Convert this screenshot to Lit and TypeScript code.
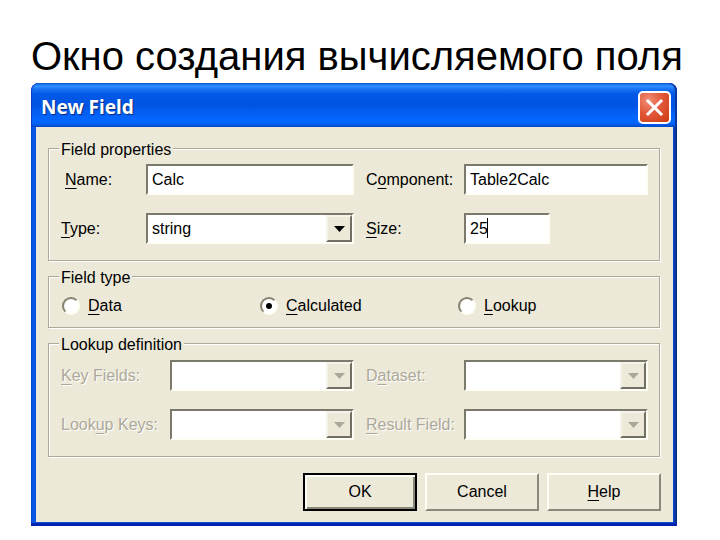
import { LitElement, html, css, svg, nothing } from "lit";
import { customElement, property, state } from "lit/decorators.js";

/** Drop-down with the sunken classic frame and a raised arrow button. */
const comboBox = (id: string, value: string, disabled = false) => html`
  <span class="combo ${disabled ? "off" : ""}">
    <select class="field" id=${id} ?disabled=${disabled}>
      <option>${value}</option>
    </select>
    <span class="arrow" aria-hidden="true">
      <svg class="tri" viewBox="0 0 11 6" width="11" height="6">${svg`<path d="M0 0H11L5.500 6Z" fill="currentColor"/>`}</svg>
    </span>
  </span>
`;

@customElement("app-root")
export class AppRoot extends LitElement {
  @property() heading = "Окно создания вычисляемого поля";
  @state() private kind = "calculated";

  static styles = css`
    :host {
      display: block;
      background: #fff;
      color: #000;
      font-family: "Liberation Sans", Arial, sans-serif;
      font-size: 16px;
      line-height: 20px;
    }
    * {
      box-sizing: border-box;
    }
    h1 {
      margin: 0;
      padding: 33px 29px 4px 31px;
      font-size: 40px;
      line-height: 46px;
      font-weight: 400;
      white-space: nowrap;
    }
    .window {
      margin: 0 43px 14px 31px;
      padding: 0 4px 4px 5px;
      border-radius: 8px 8px 0 0;
      background: linear-gradient(90deg, #0a3fc4 0, #0a5cf0 2px, #0a4ed8 5px, #0a4ed8 calc(100% - 4px), #0b3fb4 calc(100% - 3px), #062a80 100%);
      box-shadow: inset 0 -3px 0 #0322b0;
    }
    .titlebar {
      display: flex;
      align-items: center;
      justify-content: space-between;
      height: 44px;
      margin: 0 -4px 0 -5px;
      padding: 4px 6px 0 10px;
      border-radius: 8px 8px 0 0;
      background: linear-gradient(#0a56d0 0, #2f92ff 3px, #1a74f4 6px, #0358e6 11px, #0054e3 22px, #0464fb 34px, #0466ff 40px, #0148c4 44px);
      box-shadow: inset 1px 0 0 #0a3fc4, inset -2px 0 0 #0a38a0;
    }
    h2 {
      margin: 0;
      color: #fff;
      font-family: "Noto Sans", sans-serif;
      font-size: 19px;
      line-height: 24px;
      font-weight: 700;
      text-shadow: 1px 1px 1px #0a2a80;
    }
    .close {
      display: grid;
      place-items: center;
      width: 33px;
      height: 33px;
      padding: 0;
      border: 2px solid #fff;
      border-radius: 5px;
      background: radial-gradient(circle at 30% 25%, #f09078 0, #e2593a 45%, #cc3a10 100%);
    }
    form {
      padding: 9px 12px 11px;
      background: #ece9d8;
    }
    fieldset {
      min-width: 0;
      margin: 0 1px 3px 0;
      padding: 4px 11px 16px 12px;
      border: 1px solid #aca899;
      box-shadow: 1px 1px 0 #fff, inset 1px 1px 0 #fff;
    }
    .lookup {
      padding-top: 5px;
    }
    legend {
      margin-left: -2px;
      padding: 4px 2px 0;
      background: #ece9d8;
    }
    .grid {
      display: grid;
      grid-template-columns: 293fr 282fr;
      gap: 18px 12px;
    }
    .row {
      display: grid;
      grid-template-columns: 85px 1fr;
      align-items: center;
    }
    .row.wide {
      grid-template-columns: 109px 1fr;
    }
    .row.right {
      grid-template-columns: 98px 1fr;
    }
    .indent {
      padding-left: 4px;
    }
    .disabled {
      color: #aca899;
      text-shadow: 1px 1px 0 #fff;
    }
    u {
      text-decoration-thickness: 1px;
      text-underline-offset: 3px;
    }
    .field {
      display: block;
      width: 100%;
      height: 31px;
      margin: 0;
      padding: 1px 4px 0;
      border: 2px solid;
      border-color: #7b796c #fffef4 #fffef4 #7b796c;
      border-radius: 0;
      outline: 0;
      background: #fff;
      color: #000;
      font: inherit;
      appearance: none;
      opacity: 1;
    }
    .short {
      position: relative;
      width: 86px;
    }
    .caret {
      position: absolute;
      left: 23px;
      top: 5px;
      width: 1px;
      height: 20px;
      background: #000;
    }
    .combo {
      position: relative;
      display: block;
    }
    .arrow {
      position: absolute;
      top: 2px;
      right: 2px;
      bottom: 2px;
      display: grid;
      place-items: center;
      width: 26px;
      border: 2px solid;
      border-color: #f6f4ea #716f64 #716f64 #f6f4ea;
      background: #ece9d8;
      pointer-events: none;
    }
    .off .arrow {
      color: #aca899;
    }
    .tri {
      display: block;
    }
    .radios {
      display: grid;
      grid-template-columns: 198fr 198fr 190fr;
      padding: 4px 0 0 1px;
    }
    .kind {
      padding-bottom: 11px;
    }
    .radio {
      display: flex;
      align-items: center;
      gap: 8px;
    }
    .radio input {
      display: grid;
      place-items: center;
      width: 18px;
      height: 18px;
      margin: 0;
      border: 2px solid;
      border-color: #85826f #fffef4 #fffef4 #85826f;
      border-radius: 50%;
      background: #fff;
      appearance: none;
    }
    .radio input:checked::before {
      content: "";
      width: 6px;
      height: 6px;
      border-radius: 50%;
      background: #000;
    }
    .actions {
      display: flex;
      justify-content: flex-end;
      gap: 8px;
      padding-top: 13px;
    }
    .button {
      width: 114px;
      height: 38px;
      padding: 0;
      border: 2px solid;
      border-color: #fffef4 #8a8778 #8a8778 #fffef4;
      background: #ece9d8;
      color: #000;
      font: inherit;
    }
    .default {
      border: 2px solid #000;
      box-shadow: inset 2px 2px 0 #fffef4, inset -2px -2px 0 #8a8778;
    }
  `;

  private radio(id: string, key: string, rest: string) {
    return html`
      <label class="radio" for=${id}>
        <input type="radio" name="kind" id=${id} .checked=${this.kind === id} @change=${() => (this.kind = id)} />
        <span><u>${key}</u>${rest}</span>
      </label>
    `;
  }

  private textField(id: string, value: string) {
    return html`<input class="field" type="text" id=${id} .value=${value} />`;
  }

  private row(id: string, before: string, key: string, after: string, control: unknown, layout = "", labelClass = "") {
    return html`
      <div class="row ${layout}">
        <label for=${id} class=${labelClass || nothing}>${before}<u>${key}</u>${after}</label>
        ${control}
      </div>
    `;
  }

  render() {
    return html`
      <h1>${this.heading}</h1>
      <section class="window" aria-labelledby="caption">
        <header class="titlebar">
          <h2 id="caption">New Field</h2>
          <button class="close" type="button" aria-label="Close">
            <svg width="19" height="19" viewBox="0 0 19 19" aria-hidden="true">
              <path d="M3 3L16 16M16 3L3 16" stroke="#fff" stroke-width="3" stroke-linecap="square" />
            </svg>
          </button>
        </header>
        <form @submit=${(e: Event) => e.preventDefault()}>
          <fieldset>
            <legend>Field properties</legend>
            <div class="grid">
              ${this.row("name", "", "N", "ame:", this.textField("name", "Calc"), "", "indent")}
              ${this.row("component", "C", "o", "mponent:", this.textField("component", "Table2Calc"), "right")}
              ${this.row("type", "", "T", "ype:", comboBox("type", "string"))}
              ${this.row("size", "", "S", "ize:", html`<span class="short">${this.textField("size", "25")}<span class="caret"></span></span>`, "right")}
            </div>
          </fieldset>
          <fieldset class="kind">
            <legend>Field type</legend>
            <div class="radios">
              ${this.radio("data", "D", "ata")}
              ${this.radio("calculated", "C", "alculated")}
              ${this.radio("lookup", "L", "ookup")}
            </div>
          </fieldset>
          <fieldset class="lookup">
            <legend>Lookup definition</legend>
            <div class="grid">
              ${this.row("keys", "", "K", "ey Fields:", comboBox("keys", "", true), "wide", "disabled")}
              ${this.row("dataset", "D", "a", "taset:", comboBox("dataset", "", true), "right", "disabled")}
              ${this.row("lookupkeys", "Look", "u", "p Keys:", comboBox("lookupkeys", "", true), "wide", "disabled")}
              ${this.row("result", "", "R", "esult Field:", comboBox("result", "", true), "right", "disabled")}
            </div>
          </fieldset>
          <div class="actions">
            <button class="button default" type="submit">OK</button>
            <button class="button" type="button">Cancel</button>
            <button class="button" type="button"><u>H</u>elp</button>
          </div>
        </form>
      </section>
    `;
  }
}
